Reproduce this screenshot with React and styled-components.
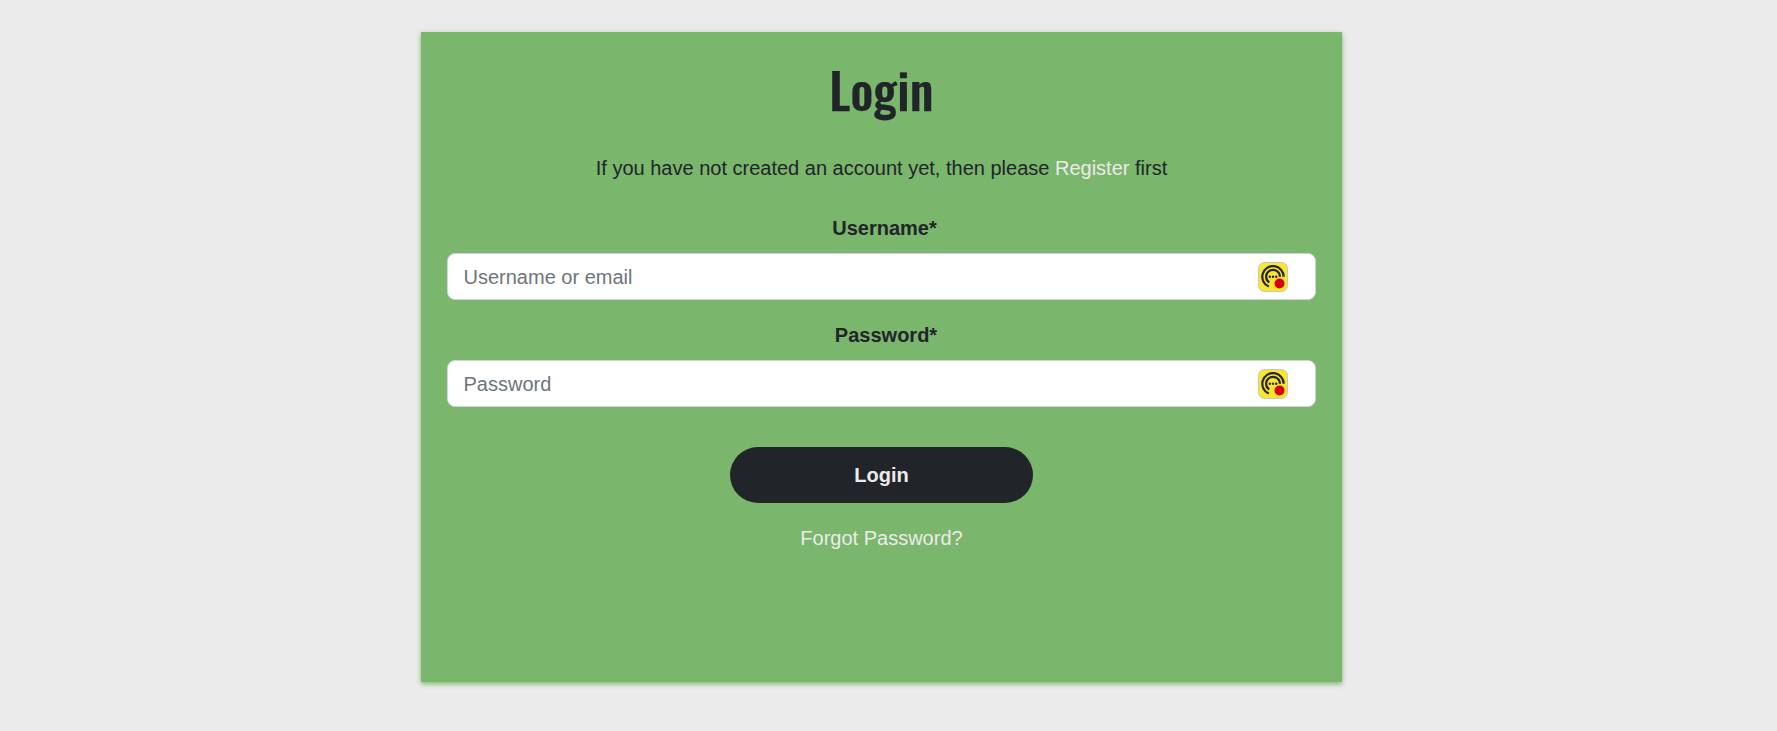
import React from "react";
import styled, { createGlobalStyle } from "styled-components";

const GlobalStyle = createGlobalStyle`
  *, *::before, *::after { box-sizing: border-box; }
  body {
    margin: 0;
    background: #ebebeb;
    color: #212529;
    font-family: "Liberation Sans", Arial, sans-serif;
    font-size: 20px;
    line-height: 30px;
  }
`;

const Page = styled.main`
  display: flex;
  justify-content: center;
  align-items: flex-start;
  min-height: 731px;
  padding: 32px 14px 0 0;
`;

const Card = styled.section`
  width: 921px;
  height: 650px;
  padding: 24px 26px 0;
  background: #7bb66d;
  box-shadow: 0 2px 5px #7bb66d;
  text-align: center;
`;

const Title = styled.h1`
  margin: 0 0 33px;
  height: 64px;
  font-family: Oswald, "Liberation Sans Narrow", "Liberation Sans", sans-serif;
  font-size: 50px;
  font-weight: 500;
  line-height: 64px;
  letter-spacing: 0.2px;
  -webkit-text-stroke: 0.25px currentColor;
`;

const Intro = styled.p`
  margin: 0 0 30px;
`;

const TextLink = styled.a`
  color: #ebebeb;
  text-decoration: none;
`;

const Form = styled.form`
  display: flex;
  flex-direction: column;
  align-items: center;
`;

const Field = styled.div`
  width: 100%;
  margin-bottom: 20px;
`;

const Label = styled.label`
  display: block;
  height: 30px;
  margin-bottom: 10px;
  padding-left: ${({ $indent }) => $indent}px;
  font-weight: 700;
`;

const InputFrame = styled.div`
  display: flex;
  align-items: center;
  height: 47px;
  padding: 0 27px 0 15.5px;
  background: #fff;
  border: 1px solid #ced4da;
  border-radius: 8px;
`;

const Input = styled.input`
  flex: 1;
  min-width: 0;
  padding: 0;
  border: 0;
  outline: 0;
  background: transparent;
  color: #212529;
  font: inherit;
  &::placeholder { color: #6c757d; opacity: 1; }
`;

const KeyIcon = styled.svg`
  flex: none;
  width: 30px;
  height: 30px;
`;

const Submit = styled.button`
  width: 303px;
  height: 56px;
  margin: 20px 0;
  padding: 0;
  border: 0;
  border-radius: 28px;
  background: #212529;
  color: #ebebeb;
  font: inherit;
  font-weight: 700;
`;

function PasswordManagerIcon() {
  return (
    <KeyIcon viewBox="0 0 30 30" aria-hidden="true">
      <rect x="0.5" y="0.5" width="29" height="29" rx="6" fill="#fae62d" stroke="#c6c6c6" />
      <g fill="none" stroke="#26251f" strokeWidth="2.2">
        <path d="M10.8 24.6A10.7 10.7 0 1 1 25.7 14.7" />
        <path d="M11.2 20.5A6.9 6.9 0 1 1 21.9 14.9" />
      </g>
      <g fill="#26251f">
        <circle cx="11.8" cy="14.8" r="1.2" />
        <circle cx="15" cy="14.8" r="1.2" />
        <circle cx="18.2" cy="14.8" r="1.2" />
      </g>
      <circle cx="21.5" cy="21.5" r="5" fill="#d60008" />
    </KeyIcon>
  );
}

function FormField({ id, label, placeholder, type = "text", labelIndent }) {
  return (
    <Field>
      <Label htmlFor={id} $indent={labelIndent}>{label}</Label>
      <InputFrame>
        <Input id={id} type={type} placeholder={placeholder} />
        <PasswordManagerIcon />
      </InputFrame>
    </Field>
  );
}

export default function App() {
  return (
    <>
      <GlobalStyle />
      <Page>
        <Card>
          <Title>Login</Title>
          <Intro>
            If you have not created an account yet, then please{" "}
            <TextLink href="#register">Register</TextLink> first
          </Intro>
          <Form onSubmit={(event) => event.preventDefault()}>
            <FormField id="username" label="Username*" placeholder="Username or email" labelIndent={6} />
            <FormField id="password" label="Password*" placeholder="Password" type="password" labelIndent={9} />
            <Submit type="submit">Login</Submit>
            <TextLink href="#forgot">Forgot Password?</TextLink>
          </Form>
        </Card>
      </Page>
    </>
  );
}
